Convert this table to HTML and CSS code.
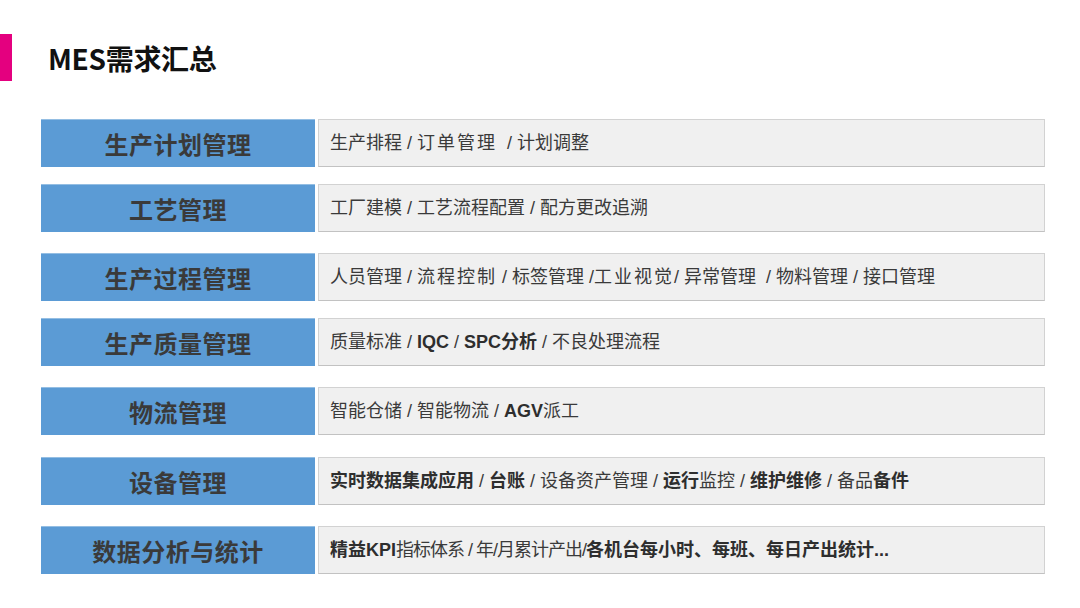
FILE: index.html
```html
<!DOCTYPE html>
<html lang="zh-CN">
<head>
<meta charset="utf-8">
<title>MES需求汇总</title>
<link rel="stylesheet" href="styles.css">
</head>
<body>
<header class="header">
  <div class="accent"></div>
  <h1 class="title">MES需求汇总</h1>
</header>
<main class="list">
  <div class="row">
    <div class="cat">生产计划管理</div>
    <div class="detail">生产排程 / <span class="wide">订单管理</span>&nbsp; / 计划调整</div>
  </div>
  <div class="row row--tight">
    <div class="cat">工艺管理</div>
    <div class="detail">工厂建模 / 工艺流程配置 / 配方更改追溯</div>
  </div>
  <div class="row">
    <div class="cat">生产过程管理</div>
    <div class="detail">人员管理 / <span class="wide">流程控制</span> / 标签管理 /<span class="wide">工业视觉</span>/ 异常管理&nbsp; / 物料管理 / 接口管理</div>
  </div>
  <div class="row row--tight">
    <div class="cat">生产质量管理</div>
    <div class="detail">质量标准 / <b>IQC</b> / <b>SPC分析</b> / 不良处理流程</div>
  </div>
  <div class="row">
    <div class="cat">物流管理</div>
    <div class="detail">智能仓储 / 智能物流 / <b>AGV</b>派工</div>
  </div>
  <div class="row row--loose">
    <div class="cat">设备管理</div>
    <div class="detail"><b>实时数据集成应用</b> / <b>台账</b> / 设备资产管理 / <b>运行</b>监控 / <b>维护维修</b> / 备品<b>备件</b></div>
  </div>
  <div class="row">
    <div class="cat">数据分析与统计</div>
    <div class="detail"><b>精益KPI</b><span class="narrow">指标体系 / 年/月累计产出/</span><b>各机台每小时、每班、每日产出统计...</b></div>
  </div>
</main>
</body>
</html>
```

FILE: styles.css
```css
html, body {
  margin: 0;
  padding: 0;
  background: #ffffff;
}

body {
  width: 1080px;
  height: 608px;
  overflow: hidden;
  font-family: "Liberation Sans", "Noto Sans CJK SC", sans-serif;
}

.header {
  display: flex;
  align-items: center;
  margin-top: 34px;
  height: 47px;
}

.accent {
  width: 12px;
  height: 47px;
  background: #e4007f;
}

.title {
  margin: 0 0 0 36px;
  font-family: "Noto Sans CJK SC", sans-serif;
  font-size: 28px;
  font-weight: 700;
  color: #111111;
  letter-spacing: -0.3px;
}

.list {
  display: flex;
  flex-direction: column;
  gap: 21px;
  margin-top: 38px;
  padding-left: 41px;
}

.row {
  display: flex;
  gap: 3px;
  height: 48px;
}

.row--tight {
  margin-top: -4px;
}

.row--loose {
  margin-top: 1px;
}

.cat {
  width: 274px;
  flex: none;
  display: flex;
  align-items: center;
  justify-content: center;
  background: #5b9bd5;
  box-shadow: inset 0 1px 0 rgba(255, 255, 255, 0.35);
  color: #3a3a3a;
  font-family: "Noto Sans CJK SC", sans-serif;
  font-size: 24px;
  font-weight: 700;
  letter-spacing: 0.5px;
}

.detail {
  width: 727px;
  box-sizing: border-box;
  padding-left: 11px;
  background: #f0f0f0;
  border: 1px solid #d2d2d2;
  border-bottom-color: #c2c2c2;
  color: #3a3a3a;
  font-size: 18px;
  line-height: 46px;
  white-space: pre;
}

.detail b {
  font-weight: 700;
  color: #2e2e2e;
}

.wide {
  letter-spacing: 2px;
}

.narrow {
  letter-spacing: -1px;
}
```
